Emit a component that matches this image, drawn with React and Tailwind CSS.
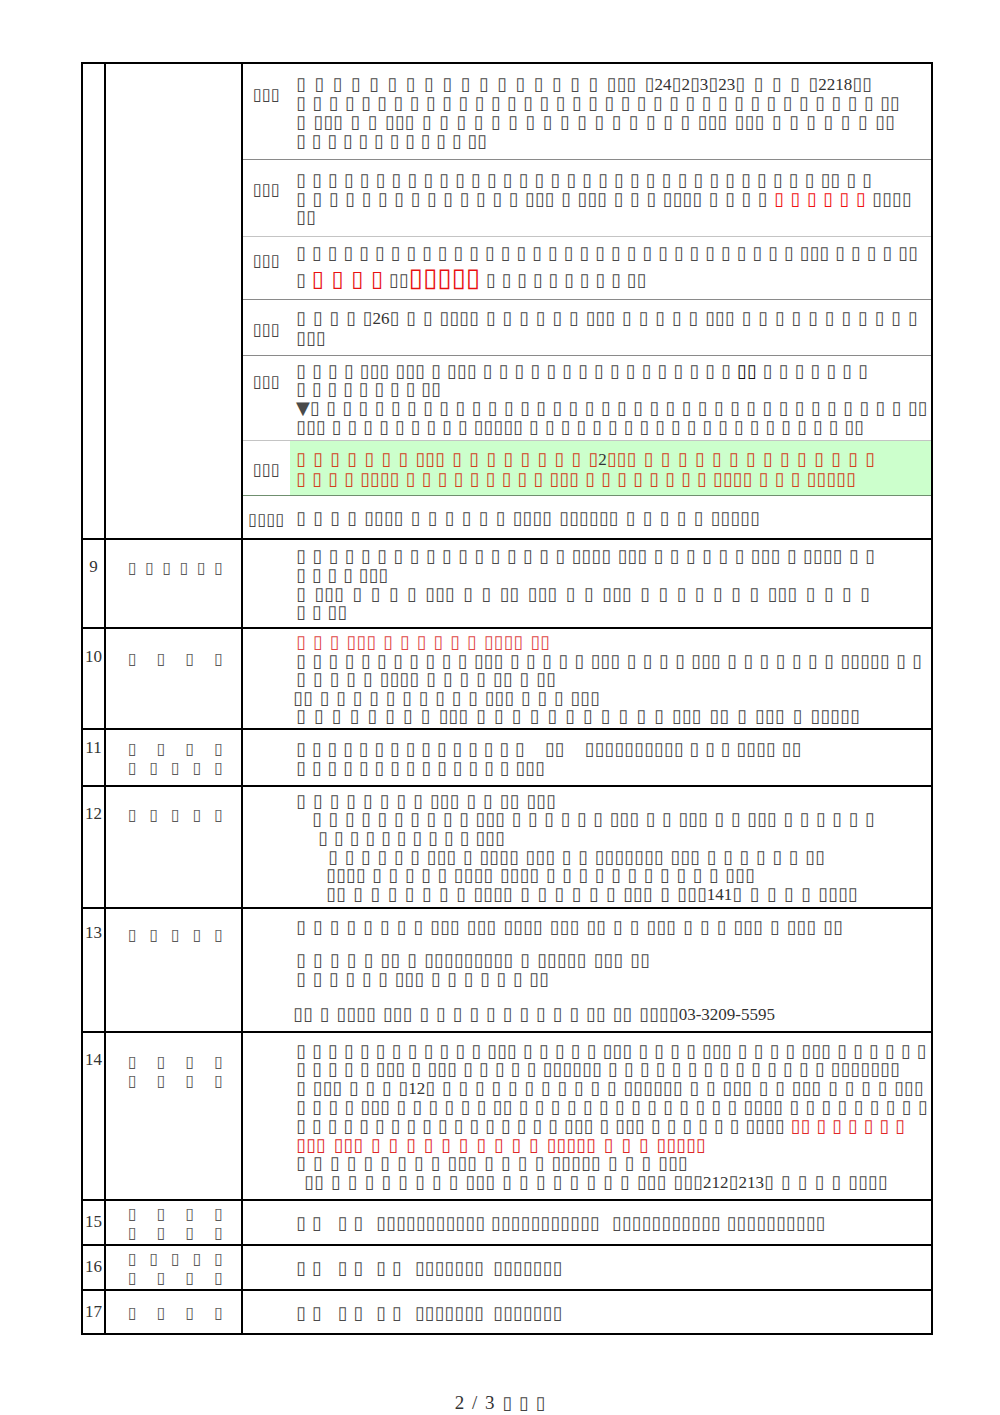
import React from "react";

const BOX = "\u25AF";
const DIG = "font-['Liberation_Serif'] text-[17px] text-[#333]";

function Run({ s }) {
  const parts = s.split(/([x▼ ]+)/).filter(Boolean);
  return parts.map((p, i) =>
    /^[x▼ ]+$/.test(p) ? (
      <span key={i}>{p.replace(/x/g, BOX)}</span>
    ) : (
      <span key={i} className={DIG}>
        {p}
      </span>
    )
  );
}

function Line({ l }) {
  if (l.blank) return <div className={l.blank} />;
  const segs = Array.isArray(l.s) ? l.s : [l.s];
  const start = l.start || 296;
  const style = {};
  if (start !== 296) style.marginLeft = start - 296;
  if (l.end) {
    style.width = l.end - start;
    const words = [];
    segs.forEach((seg) => {
      const t = typeof seg === "string" ? seg : seg.t;
      const c = typeof seg === "string" ? "" : seg.c;
      t.split(" ")
        .filter(Boolean)
        .forEach((w) => words.push({ w, c }));
    });
    return (
      <div className={`flex items-baseline justify-between whitespace-nowrap ${l.cls || ""}`} style={style}>
        {words.map((w, i) => (
          <span key={i} className={w.c}>
            <Run s={w.w} />
          </span>
        ))}
      </div>
    );
  }
  return (
    <div className={`whitespace-pre ${l.cls || ""}`} style={style}>
      {segs.map((seg, i) => {
        if (typeof seg === "string") return <Run key={i} s={seg} />;
        if (seg.g) return <span key={i} className={`inline-block ${seg.g}`} />;
        return (
          <span key={i} className={seg.c}>
            <Run s={seg.t} />
          </span>
        );
      })}
    </div>
  );
}

const RED2 = "text-[#f01010]";
const RED6 = "text-[#d2401e]";
const RED10 = "text-[#e04848]";
const RED14 = "text-[#e02828]";

const sub = [
  {
    h: "h-[96px] border-b border-[#8a8a8a]",
    lp: "pt-[22px]",
    label: "xxx",
    lines: [
      { s: "x x x x x x x x x x x x x x x x x xxx x24x2x3x23x x x x x2218xx", end: 872 },
      { s: "x x x x x x x x x x x x x x x x x x x x x x x x x x x x x x x x x x x x xx", end: 900 },
      { s: "x xxx x x xxx x x x x x x x x x x x x x x x x xxx xxx x x x x x x xx", end: 895 },
      { s: "x x x x x x x x x x x xx", end: 487 },
    ],
  },
  {
    h: "h-[77px] border-b border-[#c4c4c4]",
    lp: "pt-[21px]",
    label: "xxx",
    lines: [
      { s: "x x x x x x x x x x x x x x x x x x x x x x x x x x x x x x x x x xx x x", end: 872 },
      {
        s: [
          "x x x x x x x x x x x x x x xxx x xxx x x x xxxx x x x x",
          { t: "x x x x x x", c: RED2 },
          "xxxx",
        ],
        end: 912,
      },
      { s: "xx" },
    ],
  },
  {
    h: "h-[63px] border-b border-[#8a8a8a]",
    lp: "pt-[15px]",
    label: "xxx",
    lines: [
      { s: "x x x x x x x x x x x x x x x x x x x x x x x x x x x x x x x x xxx x x x x xx", end: 918 },
      {
        cls: "leading-[28px]",
        s: [
          "x ",
          { t: "x x x x", c: "text-[22px] font-bold text-[#e81010]" },
          " xx",
          { t: "xxxxx", c: "text-[26px] font-bold text-[#e81010]" },
          " x x x x x x x x x xx",
        ],
      },
    ],
  },
  {
    h: "h-[56px] border-b border-[#8a8a8a]",
    lp: "pt-[21px]",
    label: "xxx",
    lines: [
      { s: "x x x x x26x x x xxxx x x x x x x xxx x x x x x xxx x x x x x x x x x x x", end: 918 },
      { s: "xxx" },
    ],
  },
  {
    h: "h-[85px] border-b border-[#c4c4c4]",
    lp: "pt-[17px]",
    label: "xxx",
    lines: [
      {
        s: [
          "x x x x xxx xxx x xxx x x x x x x x x x x x x x x x x",
          { t: "xx", c: "font-bold text-[#111]" },
          "x x x x x x x",
        ],
        end: 868,
      },
      { s: "x x x x x x x x xx" },
      { s: "▼x x x x x x x x x x x x x x x x x x x x x x x x x x x x x x x x x x x x x xx", end: 928 },
      { s: "xxx x x x x x x x x x xxxxx x x x x x x x x x x x x x x x x x x x x xx", end: 864 },
    ],
  },
  {
    h: "h-[55px] border-b border-[#6f8f6f]",
    lp: "pt-[20px]",
    label: "xxx",
    green: true,
    lines: [
      { s: [{ t: "x x x x x x x xxx x x x x x x x x x2xxx x x x x x x x x x x x x x x", c: RED6 }], end: 875 },
      { s: [{ t: "x x x x xxxx x x x x x x x x x xxx x x x x x x x x xxxx x x x xxxxx", c: RED6 }], end: 856 },
    ],
  },
  {
    h: "h-[42px]",
    lp: "pt-[15px]",
    label: "xxxx",
    lines: [{ s: "x x x x xxxx x x x x x x xxxx xxxxxx x x x x x xxxxx", end: 760 }],
  },
];

const rows = [
  {
    n: "9",
    h: "h-[89px] border-b-2",
    np: "pt-[18px]",
    lp: "pt-[18px]",
    label: [6],
    lines: [
      { s: "x x x x x x x x x x x x x x x x x xxxx xxx x x x x x x xxx x xxxx x x", end: 875 },
      { s: "x x x x xxx" },
      { s: "x xxx x x x x xxx x x xx xxx x x xxx x x x x x x x xxx x x x x", end: 870 },
      { s: "x x xx" },
    ],
  },
  {
    n: "10",
    h: "h-[101px] border-b-2",
    np: "pt-[19px]",
    lp: "pt-[20px]",
    label: [4],
    lines: [
      { s: [{ t: "x x x xxx x x x x x x xxxx xx", c: RED10 }], end: 550 },
      { s: "x x x x x x x x x x x xxx x x x x x xxx x x x x xxx x x x x x x x xxxxx x x", end: 922 },
      { s: "x x x x x xxxx x x x x xx x xx", end: 556 },
      { s: "xx x x x x x x x x x x xxx x x x xxx", start: 293, end: 600 },
      { s: "x x x x x x x x xxx x x x x x x x x x x x xxx xx x xxx x xxxxx", end: 860 },
    ],
  },
  {
    n: "11",
    h: "h-[57px] border-b-2",
    np: "pt-[9px]",
    lp: "pt-[9px]",
    label: [4, 5],
    lines: [
      {
        s: [
          "x x x x x x x x x x x x x x x",
          { g: "w-[20px]" },
          "xx",
          { g: "w-[20px]" },
          "xxxxxxxxxx x x x xxxx xx",
        ],
      },
      { s: "x x x x x x x x x x x x x x xxx", end: 545 },
    ],
  },
  {
    n: "12",
    h: "h-[122px] border-b-2",
    np: "pt-[18px]",
    lp: "pt-[18px]",
    label: [5],
    lines: [
      { s: "x x x x x x x x xxx x x xx xxx", end: 556 },
      { s: "x x x x x x x x x x xxx x x x x x x xxx x x xxx x x xxx x x x x x x", start: 312, end: 875 },
      { s: "x x x x x x x x x x xxx", start: 318, end: 505 },
      { s: "x x x x x x xxx x xxxx xxx x x xxxxxxx xxx x x x x x x xx", start: 328, end: 825 },
      { s: "xxxx x x x x x xxxx xxxx x x x x x x x x x x x xxx", start: 326, end: 755 },
      { s: "xx x x x x x x x xxxx x x x x x x xxx x xxx141x x x x x xxxx", start: 326, end: 858 },
    ],
  },
  {
    n: "13",
    h: "h-[124px] border-b-2",
    np: "pt-[15px]",
    lp: "pt-[16px]",
    label: [5],
    lines: [
      { s: "x x x x x x x x xxx xxx xxxx xxx xx x x xxx x x x xxx x xxx xx", end: 843 },
      { blank: "h-[15px]" },
      { s: "x x x x x xx x xxxxxxxxx x xxxxx xxx xx", end: 650 },
      { s: "x x x x x x xxx x x x x x x xx", end: 549 },
      { blank: "h-[16px]" },
      { s: "xx x xxxx xxx x x x x x x x x x x xx xx xxxx03-3209-5595", start: 293, end: 775 },
    ],
  },
  {
    n: "14",
    h: "h-[168px] border-b-2",
    np: "pt-[18px]",
    lp: "pt-[19px]",
    label: [4, 4],
    lines: [
      { s: "x x x x x x x x x x x x xxx x x x x x xxx x x x x xxx x x x x xxx x x x x x x", end: 927 },
      { s: "x x x x x xxx x xxx x x x x x xxxxxx x x x x x x x x x x x x x x xxxxxxx", end: 900 },
      { s: "x xxx x x x x12x x x x x x x x x x x x xxxxxx x x xxx x x xxx x x x x xxx", end: 924 },
      { s: "x x x x xxx x x x x x x xx x x x x x x x x x x x x x x xxxx x x x x x x x x x", end: 928 },
      {
        s: [
          "x x x x x x x x x x x x x x x x x xxx x xxx x x x x x x xxxx",
          { t: "xx x x x x x x", c: RED14 },
        ],
        end: 905,
      },
      { s: [{ t: "xxx xxx x x x x x x x x x x xxxxx x x x xxxxx", c: RED14 }], end: 706 },
      { s: "x x x x x x x x x xxx x x x x xxxxx x x x xxx", end: 688 },
      { s: "xx x x x x x x x x xxx x x x x x x x x xxx xxx212x213x x x x x xxxx", start: 304, end: 888 },
    ],
  },
  {
    n: "15",
    h: "h-[45px] border-b-2",
    np: "pt-[12px]",
    lp: "pt-[3px]",
    label: [4, 4],
    lines: [
      {
        s: [
          "x x",
          { g: "w-[16px]" },
          "x x",
          { g: "w-[13px]" },
          "xxxxxxxxxxx xxxxxxxxxxx",
          { g: "w-[12px]" },
          "xxxxxxxxxxx xxxxxxxxxx",
        ],
      },
    ],
  },
  {
    n: "16",
    h: "h-[45px] border-b-2",
    np: "pt-[12px]",
    lp: "pt-[3px]",
    label: [5, 4],
    lines: [
      {
        s: ["x x", { g: "w-[16px]" }, "x x", { g: "w-[13px]" }, "x x", { g: "w-[13px]" }, "xxxxxxx", { g: "w-[9px]" }, "xxxxxxx"],
      },
    ],
  },
  {
    n: "17",
    h: "h-[42px]",
    np: "pt-[12px]",
    lp: "pt-[12px]",
    label: [4],
    lines: [
      {
        s: ["x x", { g: "w-[16px]" }, "x x", { g: "w-[13px]" }, "x x", { g: "w-[13px]" }, "xxxxxxx", { g: "w-[9px]" }, "xxxxxxx"],
      },
    ],
  },
];

function SubRow({ r }) {
  return (
    <div className={`flex ${r.h}`}>
      <div className={`w-[47px] shrink-0 text-center text-[16.5px] leading-[18px] text-[#444] ${r.lp}`}>
        {r.label.replace(/x/g, BOX)}
      </div>
      <div className={`flex flex-1 items-center pl-[6px] pt-[2px] ${r.green ? "bg-[#ccffcc]" : ""}`}>
        <div>
          {r.lines.map((l, i) => (
            <Line key={i} l={l} />
          ))}
        </div>
      </div>
    </div>
  );
}

function Label({ counts }) {
  return (
    <div className="ml-[22px] w-[95px] text-[16px] leading-[19px] text-[#5a5a5a]">
      {counts.map((c, i) => (
        <div key={i} className="flex justify-between">
          {Array.from({ length: c }).map((_, j) => (
            <span key={j}>{BOX}</span>
          ))}
        </div>
      ))}
    </div>
  );
}

export default function App() {
  return (
    <div className="min-h-[1415px] bg-white font-['DejaVu_Sans'] text-[18px] leading-[18.6px] text-[#4a4a4a]">
      <div className="ml-[81px] mt-[62px] w-[852px] border-2 border-black">
        <div className="flex h-[476px] border-b-2 border-black">
          <div className="w-[23px] shrink-0 border-r-2 border-black" />
          <div className="w-[137px] shrink-0 border-r-2 border-black" />
          <div className="flex flex-1 flex-col">
            {sub.map((r, i) => (
              <SubRow key={i} r={r} />
            ))}
          </div>
        </div>
        {rows.map((r) => (
          <div key={r.n} className={`flex border-black ${r.h}`}>
            <div
              className={`w-[23px] shrink-0 border-r-2 border-black text-center font-['Liberation_Serif'] text-[17px] leading-[18px] text-[#333] ${r.np}`}
            >
              {r.n}
            </div>
            <div className={`w-[137px] shrink-0 border-r-2 border-black ${r.lp}`}>
              <Label counts={r.label} />
            </div>
            <div className="flex flex-1 items-center pl-[53px] pt-[2px]">
              <div>
                {r.lines.map((l, i) => (
                  <Line key={i} l={l} />
                ))}
              </div>
            </div>
          </div>
        ))}
      </div>
      <div className="mt-[57px] text-center leading-[22px] text-[#333]">
        <span className="font-['Liberation_Serif'] text-[19px] [word-spacing:3px]">2 / 3 </span>
        <span className="text-[18px] text-[#444] [word-spacing:1px]">{`${BOX} ${BOX} ${BOX}`}</span>
      </div>
    </div>
  );
}
